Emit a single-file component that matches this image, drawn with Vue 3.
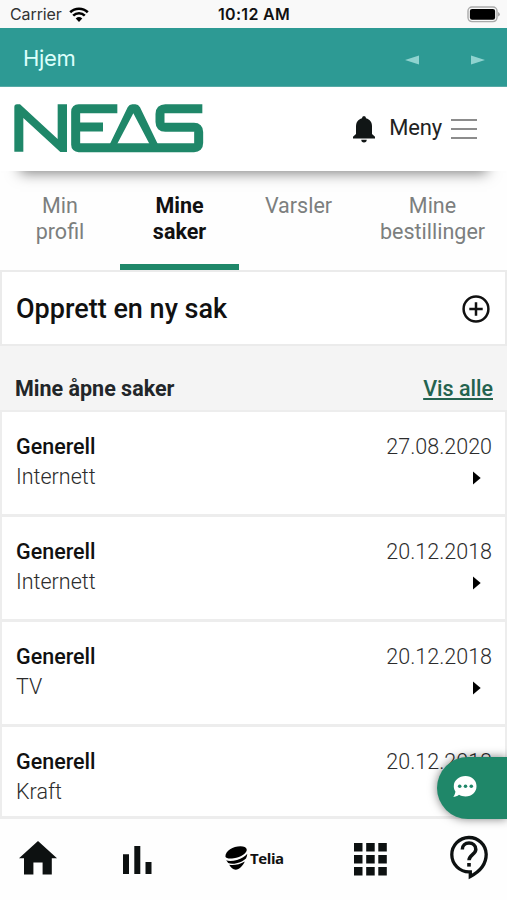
<script setup>
const tabs = [
  { lines: ['Min', 'profil'], active: false },
  { lines: ['Mine', 'saker'], active: true },
  { lines: ['Varsler'], active: false },
  { lines: ['Mine', 'bestillinger'], active: false },
]
const cases = [
  { title: 'Generell', kind: 'Internett', date: '27.08.2020' },
  { title: 'Generell', kind: 'Internett', date: '20.12.2018' },
  { title: 'Generell', kind: 'TV', date: '20.12.2018' },
  { title: 'Generell', kind: 'Kraft', date: '20.12.2018' },
]
</script>

<template>
  <div class="phone">
    <div class="status">
      <div class="carrier">
        <span class="carrier-name">Carrier</span>
        <svg class="wifi" width="20" height="15" viewBox="0 0 20 15">
          <path d="M1.2 5.300a12.600 12.600 0 0 1 17.600 0M4.200 8.600a8.300 8.300 0 0 1 11.600 0" fill="none" stroke="#000" stroke-width="2.600" />
          <path d="M6.700 11.500a5 5 0 0 1 6.600 0L10 14.900z" />
        </svg>
      </div>
      <span class="time">10:12 AM</span>
      <svg class="battery" width="33" height="17" viewBox="0 0 33 17">
        <rect x="1" y="1" width="29" height="14.600" rx="4" fill="#f8f8f8" stroke="#aaa" stroke-width="1.400" />
        <rect x="2.900" y="2.900" width="25.200" height="10.800" rx="2.200" />
        <path d="M31.200 6v4.600q1.500-.7 1.500-2.300t-1.500-2.300z" fill="#999" />
      </svg>
    </div>

    <div class="navbar">
      <span class="nav-title">Hjem</span>
      <svg class="arrows" width="80" height="10" viewBox="0 0 80 10">
        <path d="M0 5L14 .5v9zM80 5L66 .5v9z" fill="#8fd3cf" />
      </svg>
    </div>

    <header class="header">
      <svg class="logo" width="190" height="50" viewBox="42 49 570 150">
        <g fill="none" stroke="#1f8769" stroke-width="27">
          <path d="M352 66H236Q227 66 227 75V174Q227 183 236 183H582Q596 183 596 169V136Q596 122 582 122H496Q480 122 480 106V82Q480 66 496 66H607M227 121H309" />
        </g>
        <path d="M43 195V61Q43 53 51 53H60L173 157V53H201V196H181L70 94V195Z" fill="#1f8769" />
        <path d="M321 190L383 62Q388 53 397 53H406Q415 53 420 62L482 190H458L400 80L342 190Z" fill="#1f8769" />
      </svg>
      <div class="menu">
        <svg class="bell" width="22" height="27" viewBox="0 0 22 27">
          <path d="M11 0a2.200 2.200 0 0 1 2 2.300C17 3.300 19 6.500 19 10.500V18l3 2.800V22.500H0V20.800L3 18v-7.500C3 6.500 5 3.300 9 2.300A2.200 2.200 0 0 1 11 0zM8.300 23.800h5.400a2.700 2.700 0 0 1-5.400 0z" fill="#111616" />
        </svg>
        <span class="menu-label">Meny</span>
        <span class="burger"><i></i><i></i><i></i></span>
      </div>
    </header>

    <nav class="tabs">
      <div v-for="(tab, i) in tabs" :key="i" class="tab" :class="{ active: tab.active }">
        <span v-for="line in tab.lines" :key="line">{{ line }}</span>
      </div>
    </nav>

    <div class="create">
      <span class="create-label">Opprett en ny sak</span>
      <svg width="28" height="28" viewBox="0 0 28 28" fill="none" stroke="#111" stroke-width="2.500">
        <circle cx="14" cy="14" r="12.400" />
        <path d="M14 7.300v13.400M7.300 14h13.400" />
      </svg>
    </div>

    <div class="section">
      <span class="section-title">Mine åpne saker</span>
      <a class="all">Vis alle</a>
    </div>

    <div class="list">
      <div v-for="(item, i) in cases" :key="i" class="case">
        <div class="col">
          <span class="case-title">{{ item.title }}</span>
          <span class="kind">{{ item.kind }}</span>
        </div>
        <div class="col right">
          <span class="date">{{ item.date }}</span>
          <svg class="caret" width="8" height="14" viewBox="0 0 8 14"><path d="M0 .5L7.700 7L0 13.500z" /></svg>
        </div>
      </div>
      <div class="chat">
        <svg width="24" height="22" viewBox="0 0 24 22">
          <path d="M12.500 0C19 0 23.500 4.300 23.500 10.200S19 20.400 12.500 20.400c-2.500 0-4.700-.6-6.500-1.700C4.300 20.200 2.200 20.800.2 20.800 1.500 19.300 2.300 17.600 2.400 15.500 1.300 13.900.8 12.200.8 10.200.8 4.300 6 0 12.500 0z" fill="#fff" />
          <g fill="#1f8769"><circle cx="6.700" cy="10.300" r="1.800" /><circle cx="12.500" cy="10.300" r="1.800" /><circle cx="18.300" cy="10.300" r="1.800" /></g>
        </svg>
      </div>
    </div>

    <footer class="bottom">
      <svg class="home" width="38" height="34" viewBox="0 0 38 34"><path d="M19 0L38 17.300H32.800V33.500H23.600V21.500H14.400V33.500H5V17.300H0z" fill="#0d1111" /></svg>
      <svg class="bars" width="29" height="28" viewBox="0 0 29 28"><path d="M0 8.300h6V28H0zM11.300 0h6v28h-6zM22.500 16h6v12h-6z" fill="#0d1111" /></svg>
      <div class="telia">
        <svg width="23" height="24" viewBox="0 0 23 24">
          <path d="M.4 10.500C.4 5 8 .3 15.500.3c3.500 0 5.800 1.100 6.200 3C22.400 7 16 11.300 8.700 12.300 4.500 12.900.9 12.500.4 10.500zM1.200 14.200c2.200 1.200 6.500 1 10.800-.3 4.600-1.300 8.500-3.700 10.300-6.100-.1 1.600-.6 3.200-1.300 4.700-2.300 2.300-5.800 4-9.500 4.800-3.500.8-6.500.6-8.300-.2zM4.200 18.700c4 .9 10.300.1 15.600-3.200-2.200 4.600-5.500 8.200-9.100 8.200-2.800 0-4.800-2.200-6.500-5z" />
        </svg>
        <span class="telia-name">Telia</span>
      </div>
      <svg class="grid" width="33" height="33" viewBox="0 0 33 33"><path d="M0 0h8.500v8.500H0zM12.200 0h8.500v8.500h-8.500zM24.300 0h8.500v8.500h-8.500zM0 12h8.500v8.500H0zM12.200 12h8.500v8.500h-8.500zM24.300 12h8.500v8.500h-8.500zM0 24h8.500v8.500H0zM12.200 24h8.500v8.500h-8.500zM24.300 24h8.500v8.500h-8.500z" fill="#0d1111" /></svg>
      <svg class="help" width="38" height="45" viewBox="0 0 38 45" fill="none" stroke="#0d1111">
        <path d="M19 36.900A17.200 17.200 0 1 1 36.200 19.300C36.200 28.500 30 36.500 20.300 41.500V36.900z" stroke-width="3.300" />
        <path d="M12.300 14.500C12.300 10.500 15.200 8.100 19 8.100s6.800 2.600 6.800 6.300c0 4.800-6.800 5.700-6.800 10.800" stroke-width="3.500" />
        <rect x="17.200" y="28" width="3.600" height="3.600" fill="#0d1111" stroke="none" />
      </svg>
    </footer>
  </div>
</template>

<style>
body { margin: 0; background: #fff; }
</style>

<style scoped>
.phone { width: 507px; height: 900px; overflow: hidden; display: flex; flex-direction: column; background: #fefefe; font-family: Roboto, "Liberation Sans", sans-serif; color: #111; }
.phone * { box-sizing: border-box; }
svg { display: block; flex: none; }
.status { height: 28px; flex: none; display: grid; grid-template-columns: 1fr auto 1fr; align-items: center; padding: 0 7px 0 10px; background: #f9f9f9; font-family: Inter, sans-serif; font-size: 16px; }
.carrier { display: flex; align-items: center; gap: 7px; color: #333; }
.carrier-name { letter-spacing: -0.1px; }
.time { font-weight: 600; color: #111; letter-spacing: 0.3px; margin-right: 2px; }
.battery { justify-self: end; }
.navbar { height: 59px; flex: none; background: #2d9a94; display: flex; align-items: center; justify-content: space-between; padding: 1px 22px 0 23px; border-bottom: 1px solid #57aaa6; }
.nav-title { color: #dcfffb; font-family: Inter, sans-serif; font-size: 22px; letter-spacing: -0.3px; line-height: 28px; }
.arrows { margin-top: 4px; }
.header { height: 84px; flex: none; display: flex; justify-content: space-between; align-items: flex-start; padding: 16px 30px 0 14px; background: #fff; position: relative; z-index: 1; box-shadow: 0 22px 13px -20px rgba(0, 0, 0, 0.5); }
.menu { display: flex; align-items: center; height: 50px; padding-top: 2px; }
.menu-label { font-size: 22px; margin: -3px 9px 0 14px; color: #222; letter-spacing: -0.2px; }
.burger { display: flex; flex-direction: column; gap: 7px; width: 26px; }
.burger i { height: 2px; background: #8c8c8c; }
.tabs { height: 99px; flex: none; display: grid; grid-template-columns: 120px 119px 119px 149px; }
.tab { display: flex; flex-direction: column; align-items: center; padding-top: 22px; font-size: 21.500px; line-height: 26px; color: #7c7f7e; border-bottom: 6px solid transparent; }
.tab.active { font-weight: 700; color: #111; border-bottom-color: #1f8769; }
.create { height: 76px; flex: none; border: 2px solid #ebebeb; background: #fff; display: flex; align-items: center; justify-content: space-between; padding: 1px 15px 0 14px; }
.create-label { font-size: 27px; font-weight: 500; line-height: 32px; padding-top: 1px; }
.section { height: 64px; flex: none; background: #f4f4f4; display: flex; justify-content: space-between; align-items: flex-start; padding: 30px 14px 0 15px; font-size: 21.500px; line-height: 26px; }
.section-title { font-weight: 700; color: #222629; }
.all { color: #24634f; font-weight: 500; text-decoration: underline; }
.list { height: 409px; flex: none; background: #fff; position: relative; border-bottom: 3px solid #ededed; }
.case { height: 105px; border: 2px solid #ededed; border-top-width: 0; border-bottom-width: 3px; display: flex; justify-content: space-between; padding: 20px 13px 0 14px; }
.list .case:first-child { height: 107px; border-top-width: 2px; }
.list .case:nth-child(4) { height: 91px; border-bottom-width: 0; }
.col { display: flex; flex-direction: column; font-size: 21.500px; line-height: 30px; }
.right { align-items: flex-end; }
.case-title { font-weight: 500; }
.kind, .date { font-weight: 300; color: #2c2c2c; }
.caret { margin: 9px 11px 0 0; }
.chat { position: absolute; right: 0; bottom: -3px; width: 70px; height: 62px; border-radius: 31px 0 0 31px; background: #1f8769; box-shadow: 0 0 10px rgba(0, 0, 0, 0.5); padding: 19px 0 0 16px; }
.bottom { height: 81px; flex: none; display: flex; align-items: center; padding: 0 19px 4px; }
.bars { margin: 4px 0 0 66px; }
.telia { display: flex; align-items: center; gap: 2px; margin-left: 73px; width: 60px; }
.telia-name { font-family: "Open Sans", sans-serif; font-weight: 700; font-size: 15px; letter-spacing: -0.4px; line-height: 20px; }
.grid { margin: 3px 0 0 69px; }
.help { margin-left: auto; }
</style>
